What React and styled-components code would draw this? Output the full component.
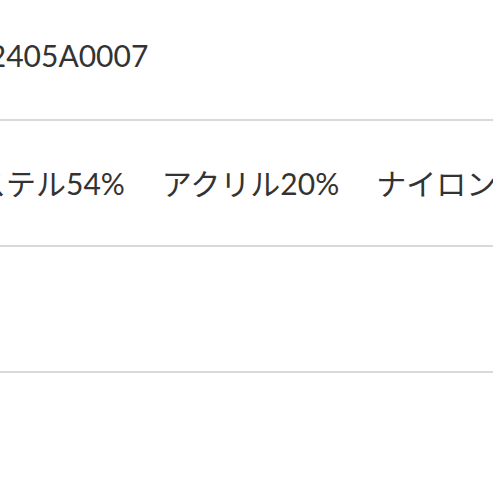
import styled, { createGlobalStyle } from "styled-components"

const GlobalStyle = createGlobalStyle`
    html, body {
        margin: 0;
        padding: 0;
        background: #ffffff;
        overflow: hidden;
    }
`

const Sheet = styled.div`
    width: 493px;
    height: 493px;
    overflow: hidden;
    font-family: Lato, "Noto Sans CJK JP", sans-serif;
    color: #333333;
    background: #ffffff;
`

const Row = styled.div`
    display: flex;
    align-items: center;
    box-sizing: border-box;
    height: ${props => props.$height}px;
    padding-bottom: ${props => props.$lift || 0}px;
    border-bottom: ${props => props.$last ? "none" : "2px solid #d9d9d9"};
`

const Value = styled.p`
    display: flex;
    gap: 37px;
    margin: 0 0 0 ${props => props.$indent}px;
    font-size: 30px;
    line-height: 1.2;
    white-space: nowrap;
`

export default function App() {
    const materials = ["ポリエステル54%", "アクリル20%", "ナイロン26%"];

    return (
        <>
            <GlobalStyle />
            <Sheet>
                <Row $height={121} $lift={10}>
                    <Value $indent={-46}>012405A0007</Value>
                </Row>
                <Row $height={126}>
                    <Value $indent={-114}>
                        {materials.map(m => <span key={m}>{m}</span>)}
                    </Value>
                </Row>
                <Row $height={126} />
                <Row $height={120} $last />
            </Sheet>
        </>
    )
}
